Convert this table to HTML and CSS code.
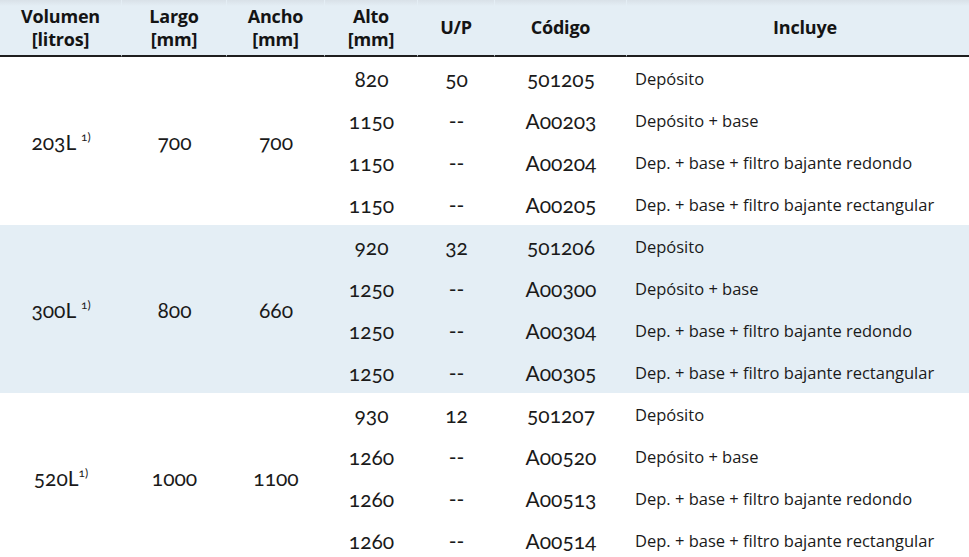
FILE: index.html
```html
<!DOCTYPE html>
<html lang="es">
<head>
<meta charset="utf-8">
<link rel="stylesheet" href="styles.css">
<title>Depósitos</title>
</head>
<body>
<table class="spec">
  <colgroup>
    <col class="c-vol"><col class="c-largo"><col class="c-ancho"><col class="c-alto"><col class="c-up"><col class="c-cod"><col class="c-inc">
  </colgroup>
  <thead>
    <tr>
      <th>Volumen<br>[litros]</th>
      <th>Largo<br>[mm]</th>
      <th>Ancho<br>[mm]</th>
      <th>Alto<br>[mm]</th>
      <th>U/P</th>
      <th>Código</th>
      <th class="th-inc">Incluye</th>
    </tr>
  </thead>
  <tbody class="grp">
    <tr><td rowspan="4" class="num">203L <sup>1)</sup></td><td rowspan="4" class="num">700</td><td rowspan="4" class="num">700</td><td class="num">820</td><td class="num">50</td><td class="num">501205</td><td class="inc">Depósito</td></tr>
    <tr><td class="num">1150</td><td class="num">--</td><td class="num">A00203</td><td class="inc">Depósito + base</td></tr>
    <tr><td class="num">1150</td><td class="num">--</td><td class="num">A00204</td><td class="inc">Dep. + base + filtro bajante redondo</td></tr>
    <tr><td class="num">1150</td><td class="num">--</td><td class="num">A00205</td><td class="inc">Dep. + base + filtro bajante rectangular</td></tr>
  </tbody>
  <tbody class="grp alt">
    <tr><td rowspan="4" class="num">300L <sup>1)</sup></td><td rowspan="4" class="num">800</td><td rowspan="4" class="num">660</td><td class="num">920</td><td class="num">32</td><td class="num">501206</td><td class="inc">Depósito</td></tr>
    <tr><td class="num">1250</td><td class="num">--</td><td class="num">A00300</td><td class="inc">Depósito + base</td></tr>
    <tr><td class="num">1250</td><td class="num">--</td><td class="num">A00304</td><td class="inc">Dep. + base + filtro bajante redondo</td></tr>
    <tr><td class="num">1250</td><td class="num">--</td><td class="num">A00305</td><td class="inc">Dep. + base + filtro bajante rectangular</td></tr>
  </tbody>
  <tbody class="grp">
    <tr><td rowspan="4" class="num">520L<sup>1)</sup></td><td rowspan="4" class="num">1000</td><td rowspan="4" class="num">1100</td><td class="num">930</td><td class="num">12</td><td class="num">501207</td><td class="inc">Depósito</td></tr>
    <tr><td class="num">1260</td><td class="num">--</td><td class="num">A00520</td><td class="inc">Depósito + base</td></tr>
    <tr><td class="num">1260</td><td class="num">--</td><td class="num">A00513</td><td class="inc">Dep. + base + filtro bajante redondo</td></tr>
    <tr><td class="num">1260</td><td class="num">--</td><td class="num">A00514</td><td class="inc">Dep. + base + filtro bajante rectangular</td></tr>
  </tbody>
</table>
</body>
</html>
```
FILE: styles.css
```css
html, body {
  margin: 0;
  padding: 0;
  background: #ffffff;
  overflow: hidden;
}
body {
  font-family: "Open Sans", sans-serif;
  color: #1a1a1a;
}
.spec {
  width: 969px;
  border-collapse: separate;
  border-spacing: 0;
  table-layout: fixed;
}
.c-vol { width: 122px; }
.c-largo { width: 105px; }
.c-ancho { width: 98px; }
.c-alto { width: 93px; }
.c-up { width: 77px; }
.c-cod { width: 132px; }
.c-inc { width: 342px; }

thead th {
  height: 55px;
  padding: 0;
  background: linear-gradient(#d9e1e8 0, #e4eef5 6px, #e4eef5 100%);
  border-bottom: 2px solid #1e1e1e;
  border-right: 1px solid #e4eef5;
  font-family: "Open Sans", sans-serif;
  font-weight: 700;
  font-size: 18px;
  line-height: 23px;
  letter-spacing: -0.2px;
  text-align: center;
  vertical-align: middle;
  color: #141414;
}
thead th:last-child { border-right: 0; }
.th-inc { padding-left: 14px; }

tbody td {
  height: 42px;
  padding: 0;
  vertical-align: middle;
}
.alt td { background: #e4eef5; }

.num {
  text-align: center;
  font-family: "Lato", sans-serif;
  font-variant-numeric: oldstyle-nums;
  font-feature-settings: "onum" 1;
  font-size: 21px;
  color: #1a1a1a;
}
.num sup {
  font-size: 12px;
  vertical-align: 9px;
  line-height: 0;
}
.inc {
  text-align: left;
  padding-left: 8px !important;
  font-family: "Open Sans", sans-serif;
  font-size: 16.5px;
  color: #1a1a1a;
  white-space: nowrap;
}
```
